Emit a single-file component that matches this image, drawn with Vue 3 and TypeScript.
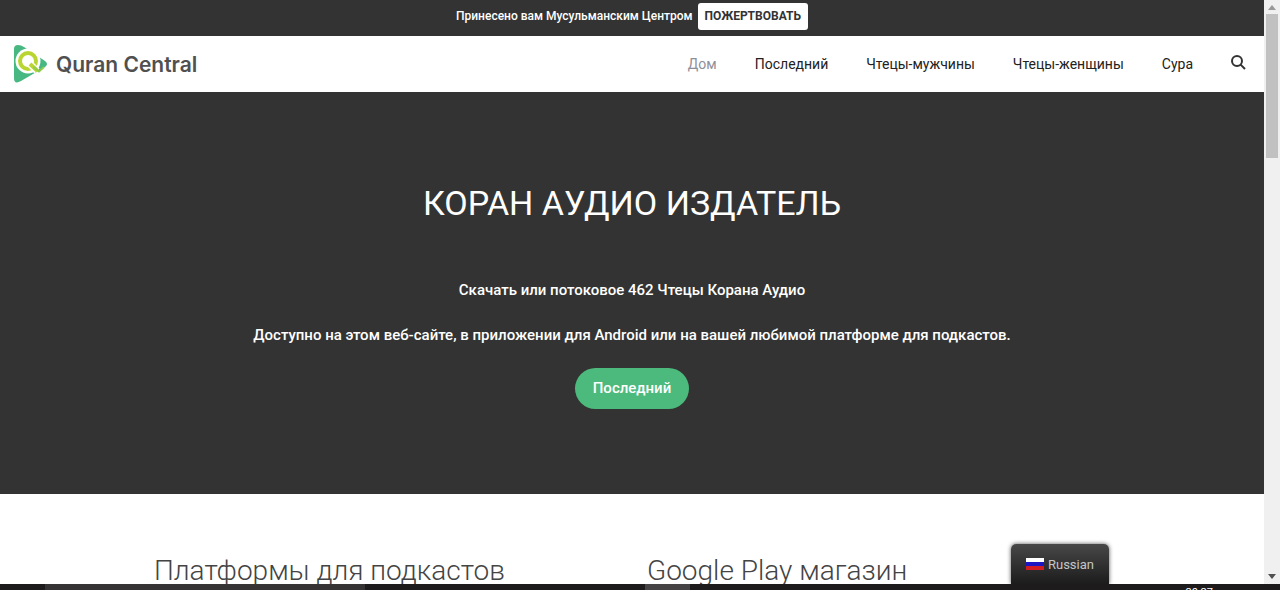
<script setup lang="ts">
interface NavLink {
  label: string
  active?: boolean
}

const links: NavLink[] = [
  { label: 'Дом', active: true },
  { label: 'Последний' },
  { label: 'Чтецы-мужчины' },
  { label: 'Чтецы-женщины' },
  { label: 'Сура' },
]

const sections: string[] = ['Платформы для подкастов', 'Google Play магазин']
</script>

<template>
  <div class="screen">
    <div class="viewport">
      <div class="page">
        <div class="topbar">
          <span>Принесено вам Мусульманским Центром</span>
          <a class="donate" href="#">ПОЖЕРТВОВАТЬ</a>
        </div>

        <header class="header">
          <a class="brand" href="#">
            <svg class="mark" viewBox="0 0 36 40" aria-hidden="true">
              <path d="M1 5Q1 1 5 1Q8 1 11 3L32 17Q36 20 32 23L8 37Q1 41 1 34Z" fill="#47b881" />
              <circle cx="15" cy="17" r="12.500" fill="#fff" />
              <circle cx="15" cy="17" r="8" fill="none" stroke="#b9d532" stroke-width="4" />
              <path d="M16 19L24 27" stroke="#fff" stroke-width="7" />
              <path d="M17 20L24.500 27" stroke="#b9d532" stroke-width="4" />
              <path d="M20.500 23L26 27.500L31 23" fill="none" stroke="#8fca4c" stroke-width="2" />
            </svg>
            <span>Quran Central</span>
          </a>
          <nav class="nav">
            <a v-for="l in links" :key="l.label" href="#" :class="{ active: l.active }">{{ l.label }}</a>
            <button class="search" type="button" aria-label="Поиск">
              <svg viewBox="0 0 15 18" aria-hidden="true">
                <circle cx="6" cy="6" r="5" />
                <path d="M9.600 9.600L14 14" />
              </svg>
            </button>
          </nav>
        </header>

        <section class="hero">
          <h1>КОРАН АУДИО ИЗДАТЕЛЬ</h1>
          <p>Скачать или потоковое 462 Чтецы Корана Аудио</p>
          <p>Доступно на этом веб-сайте, в приложении для Android или на вашей любимой платформе для подкастов.</p>
          <a class="cta" href="#">Последний</a>
        </section>

        <section class="columns">
          <h2 v-for="s in sections" :key="s">{{ s }}</h2>
        </section>

        <button class="language" type="button">
          <svg viewBox="0 0 18 12" aria-hidden="true">
            <path d="M0 0H18V4H0Z" fill="#fff" />
            <path d="M0 4H18V8H0Z" fill="#1d14c4" />
            <path d="M0 8H18V12H0Z" fill="#d01c22" />
          </svg>
          <span>Russian</span>
        </button>
      </div>

      <div class="scrollbar" aria-hidden="true">
        <svg class="arrow up" viewBox="0 0 8 5"><path d="M0 5L4 0L8 5Z" /></svg>
        <div class="thumb"></div>
        <svg class="arrow down" viewBox="0 0 8 5"><path d="M0 0L4 5L8 0Z" /></svg>
      </div>
    </div>

    <div class="taskbar">
      <div class="taskbar-search"></div>
      <div class="taskbar-app"></div>
      <span class="clock">20:27</span>
    </div>
  </div>
</template>

<style>
body {
  margin: 0;
  overflow: hidden;
}
</style>

<style scoped>
.screen {
  display: flex;
  flex-direction: column;
  height: 100vh;
  font-family: Roboto, "Liberation Sans", sans-serif;
  color: #222;
  background: #fff;
}
.screen a {
  color: inherit;
  text-decoration: none;
}
.viewport {
  flex: 1;
  min-height: 0;
  display: flex;
}
.page {
  flex: 1;
  min-width: 0;
  position: relative;
  overflow: hidden;
}
.topbar {
  display: flex;
  justify-content: center;
  align-items: center;
  gap: 5px;
  padding: 3px 0 6px;
  background: #333;
  color: #fff;
  font-size: 12px;
  line-height: 27px;
  font-weight: 500;
}
.topbar .donate {
  padding: 0 7px;
  border-radius: 3px;
  background: #fff;
  color: #333;
  font-weight: 700;
}
.header {
  display: flex;
  justify-content: space-between;
  align-items: center;
  height: 56px;
  padding: 0 18px 0 13px;
}
.brand {
  display: flex;
  align-items: center;
  gap: 7px;
  font-family: Inter, "Open Sans", sans-serif;
  font-size: 21px;
  font-weight: 600;
}
.brand span {
  color: #505050;
}
.mark {
  width: 36px;
  height: 40px;
}
.nav {
  display: flex;
  align-items: center;
  gap: 38px;
  font-size: 14px;
}
.nav .active {
  color: #8f8f99;
}
.search {
  display: flex;
  padding: 0;
  border: 0;
  background: none;
}
.search svg {
  width: 15px;
  height: 18px;
  fill: none;
  stroke: #333;
  stroke-width: 2;
}
.hero {
  display: flex;
  flex-direction: column;
  align-items: center;
  padding: 87px 20px 85px;
  background: #333;
  color: #fff;
  text-align: center;
}
.hero h1 {
  margin: 0 0 51px;
  font-size: 34px;
  line-height: 48px;
  font-weight: 400;
}
.hero p {
  margin: 0 0 21px;
  font-size: 15px;
  line-height: 24px;
  font-weight: 500;
}
.hero .cta {
  padding: 0 18px;
  border-radius: 21px;
  background: #4cba7d;
  font-size: 15px;
  line-height: 41px;
  font-weight: 500;
}
.columns {
  display: grid;
  grid-template-columns: 1fr 1fr;
  gap: 20px;
  padding: 57px 144px 20px 154px;
}
.columns h2 {
  margin: 0;
  color: #444;
  font-size: 28px;
  line-height: 40px;
  font-weight: 300;
  white-space: nowrap;
}
.language {
  position: absolute;
  right: 155px;
  bottom: 0;
  display: flex;
  align-items: center;
  gap: 4px;
  height: 40px;
  padding: 0 15px;
  border: 0;
  border-radius: 5px 5px 0 0;
  background: linear-gradient(#484848, #1c1c1c);
  box-shadow: 0 0 4px #555;
  color: #c6c6c6;
  font: 400 13px Roboto, "Liberation Sans", sans-serif;
}
.language svg {
  width: 18px;
  height: 12px;
}
.scrollbar {
  display: flex;
  flex-direction: column;
  align-items: center;
  box-sizing: border-box;
  width: 16px;
  padding: 5px 0;
  background: #f0f0f0;
}
.thumb {
  width: 12px;
  height: 144px;
  margin-top: 4px;
  background: #c1c1c1;
}
.arrow {
  width: 8px;
  height: 5px;
  fill: #999;
}
.down {
  margin-top: auto;
  fill: #505050;
}
.taskbar {
  display: flex;
  height: 6px;
  overflow: hidden;
  background: #1d1b1c;
}
.taskbar-search {
  width: 25%;
  margin-left: 45px;
  background: #353334;
}
.taskbar-app {
  width: 45px;
  margin-left: 280px;
  background: #454344;
}
.clock {
  margin: 3px 67px 0 auto;
  color: #fff;
  font-size: 11px;
  line-height: 12px;
}
</style>
